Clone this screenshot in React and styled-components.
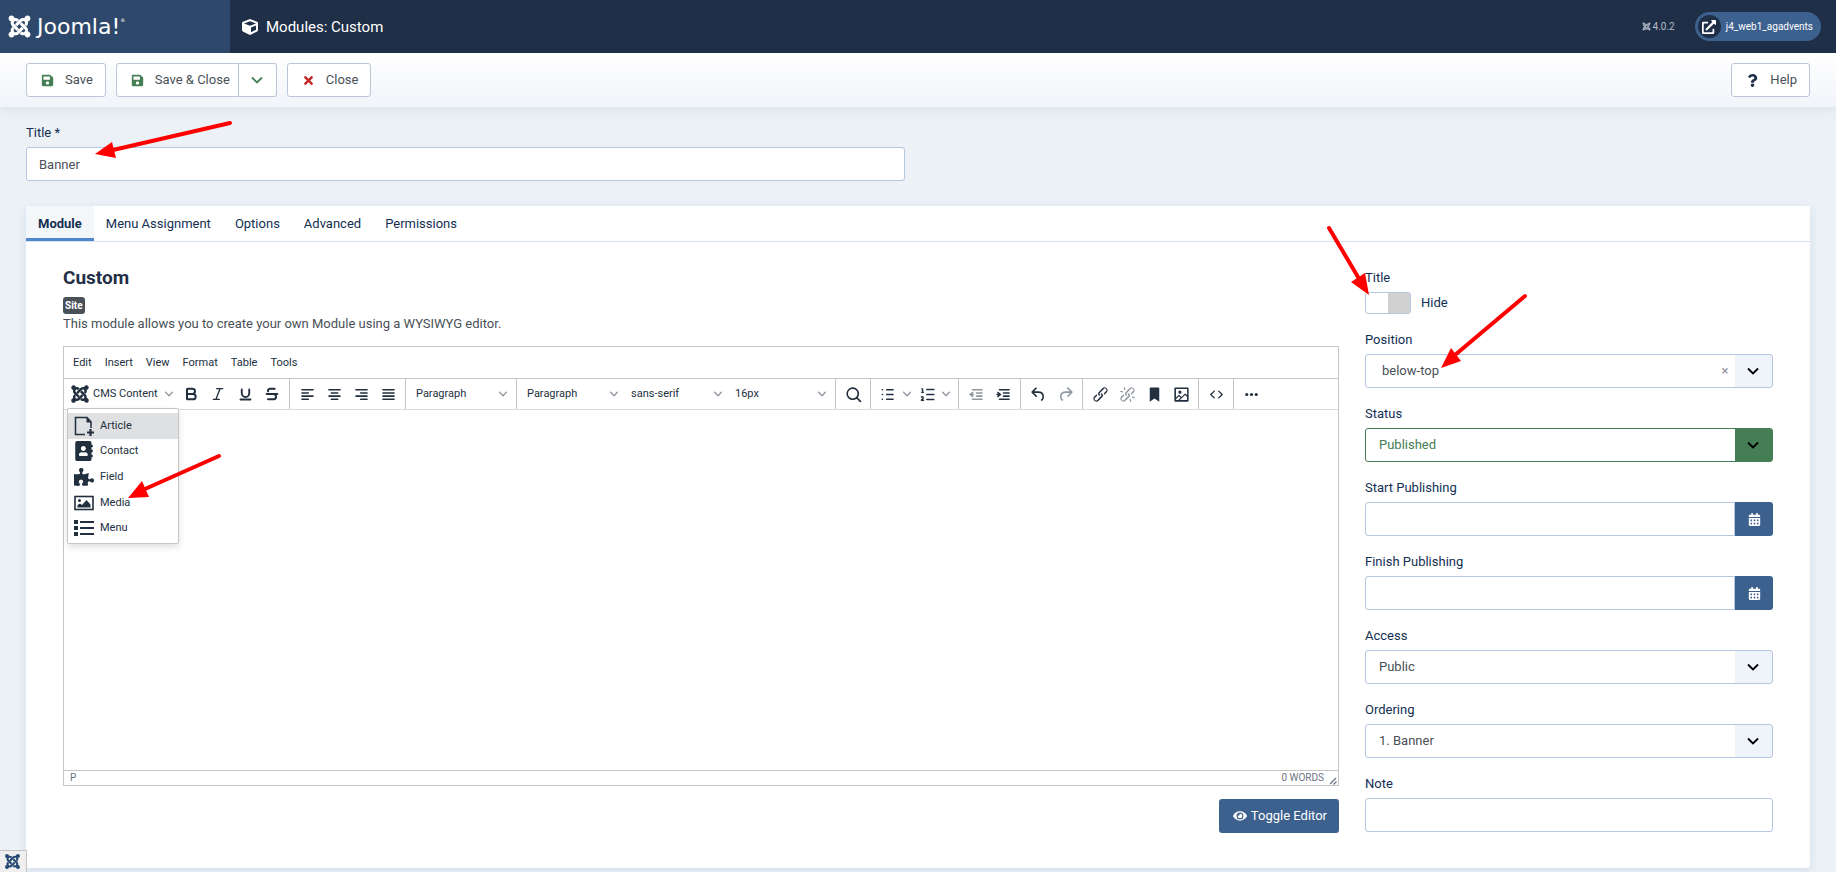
import React from "react";
import styled, { createGlobalStyle } from "styled-components";
import {
  FaJoomla,
  FaCube,
  FaSave,
  FaTimes,
  FaQuestion,
  FaExternalLinkAlt,
  FaEye,
  FaCalendarAlt,
  FaAddressBook,
  FaPuzzlePiece,
} from "react-icons/fa";
import { Bold, Italic, Underline, Strikethrough, ListOrdered } from "lucide-react";

const GlobalStyle = createGlobalStyle`
  :root {
    --color-header: #1f2f47;
    --color-logo: #2e486b;
    --color-page: #ebf1f5;
    --color-primary: #3d618f;
    --color-label: #132f53;
    --color-text: #495057;
    --color-editor: #222f3e;
    --color-line: #c5c5c5;
    --color-input-line: #b4c6e0;
    --color-success: #457d54;
    --font-size-small: 10px;
    --font-size-editor: 11px;
    --font-size-normal: 13px;
  }
  * {
    box-sizing: border-box;
  }
  body {
    margin: 0;
    background-color: var(--color-page);
    color: var(--color-text);
    font-family: Roboto, "Liberation Sans", sans-serif;
    font-size: var(--font-size-normal);
    line-height: 20px;
  }
  button, input, select {
    font: inherit;
    color: inherit;
    margin: 0;
  }
  button {
    padding: 0;
    border: 0;
    background: none;
    cursor: pointer;
  }
  svg {
    display: block;
    flex: none;
  }
`;

const Page = styled.div`
  position: relative;
`;

/* header */

const Header = styled.header`
  display: flex;
  height: 53px;
  background-color: var(--color-header);
  color: #fff;
`;

const Logo = styled.a`
  display: flex;
  align-items: center;
  gap: 5px;
  width: 230px;
  padding: 0 7px;
  background-color: var(--color-logo);
  color: #fff;
  text-decoration: none;
`;

const LogoText = styled.span`
  font-family: "DejaVu Sans", sans-serif;
  font-size: 22px;
  font-weight: 400;
  line-height: 24px;
`;

const LogoMark = styled.sup`
  font-size: 5px;
  line-height: 5px;
  vertical-align: 12px;
`;

const HeaderTitle = styled.h1`
  display: flex;
  align-items: center;
  gap: 8px;
  flex: 1;
  margin: 0;
  padding-left: 12px;
  font-size: 15px;
  font-weight: 400;
`;

const HeaderTools = styled.div`
  display: flex;
  align-items: center;
  gap: 20px;
  padding-right: 15px;
  font-size: var(--font-size-small);
`;

const Version = styled.span`
  display: flex;
  align-items: center;
  gap: 2px;
  color: #b5bdc8;
`;

const SiteLink = styled.a`
  display: flex;
  align-items: center;
  gap: 5px;
  height: 29px;
  padding: 0 8px 0 3px;
  border-radius: 15px;
  background-color: var(--color-primary);
  color: #fff;
  text-decoration: none;
`;

const SiteIcon = styled.span`
  display: flex;
  align-items: center;
  justify-content: center;
  width: 23px;
  height: 23px;
  border-radius: 50%;
  background-color: var(--color-header);
`;

/* toolbar */

const Toolbar = styled.div`
  display: flex;
  gap: 10px;
  padding: 10px 26px;
  background-image: linear-gradient(#fff, #f1f4f9);
  box-shadow: 0 3px 10px rgba(30, 60, 120, 0.08);
`;

const ToolbarButton = styled.button`
  display: flex;
  align-items: center;
  gap: 11px;
  height: 34px;
  padding: 0 12px 0 14px;
  border: 1px solid #bcc6d9;
  border-radius: ${(props) => props.$radius || "3px"};
  background-color: #fff;
  margin-left: ${(props) => (props.$end ? "auto" : "0")};

  svg {
    color: ${(props) => props.$iconColor || "var(--color-header)"};
  }
`;

const SplitGroup = styled.div`
  display: flex;
`;

const SplitMain = styled(ToolbarButton)`
  padding: 0 8px 0 14px;
`;

const SplitToggle = styled(ToolbarButton)`
  justify-content: center;
  width: 38px;
  padding: 0;
  border-left: 0;
`;

/* form */

const Main = styled.main`
  padding: 16px 26px 4px;
`;

const HalfField = styled.div`
  display: grid;
  gap: 4px;
  width: calc(50% - 13px);
  margin-bottom: 25px;
`;

const Field = styled.div`
  display: grid;
  gap: 4px;
`;

const Label = styled.label`
  color: var(--color-label);
`;

const TextInput = styled.input`
  width: 100%;
  min-width: 0;
  height: 34px;
  padding: 0 12px;
  border: 1px solid var(--color-input-line);
  border-radius: ${(props) => (props.$joined ? "3px 0 0 3px" : "3px")};
  background-color: #fff;
  outline: 0;
`;

const InputGroup = styled.div`
  display: flex;
`;

const DateButton = styled.button`
  display: flex;
  align-items: center;
  justify-content: center;
  flex: none;
  width: 38px;
  height: 34px;
  border-radius: 0 3px 3px 0;
  background-color: var(--color-primary);
  color: #fff;
`;

const SelectBox = styled.div`
  display: flex;
  align-items: center;
  position: relative;
  height: 34px;
  border: 1px solid ${(props) => props.$line || "var(--color-input-line)"};
  border-radius: 3px;
  overflow: hidden;
  background-image: linear-gradient(
    ${(props) => props.$fill || "#eff4fb"},
    ${(props) => props.$fill || "#eff4fb"}
  );
  background-position: right;
  background-size: 37px 100%;
  background-repeat: no-repeat;
  color: ${(props) => props.$color || "inherit"};

  > svg {
    position: absolute;
    right: 13px;
    color: #000;
    pointer-events: none;
  }
`;

const Select = styled.select`
  width: 100%;
  height: 100%;
  padding: 0 ${(props) => (props.$wide ? "16px" : "13px")};
  border: 0;
  background: none;
  appearance: none;
  outline: 0;
`;

const ClearButton = styled.button`
  position: absolute;
  right: 42px;
  width: 10px;
  color: #8c9197;
  font-size: var(--font-size-normal);
`;

const SwitchRow = styled.div`
  display: flex;
  align-items: center;
  gap: 10px;
  height: 22px;
  color: var(--color-label);
`;

const Switch = styled.input`
  appearance: none;
  width: 46px;
  height: 22px;
  border: 1px solid var(--color-input-line);
  border-radius: 3px;
  background-image: linear-gradient(90deg, #fff 50%, #d1d1d1 50%);
`;

/* card */

const Card = styled.section`
  border-radius: 0 0 3px 3px;
  background-color: #fff;
  box-shadow: 0 3px 10px rgba(40, 90, 170, 0.12);
`;

const Tabs = styled.div`
  display: flex;
  height: 36px;
  border-bottom: 1px solid #d6e0ec;
`;

const Tab = styled.button`
  padding: 0 12px;
  color: var(--color-label);
  font-weight: ${(props) => (props.$active ? 700 : 400)};
  background-color: ${(props) => (props.$active ? "#f3f7fa" : "transparent")};
  box-shadow: ${(props) => (props.$active ? "inset 0 -3px #4f86cc" : "none")};
`;

const CardBody = styled.div`
  display: grid;
  grid-template-columns: repeat(12, minmax(0, 1fr));
  column-gap: 26px;
  padding: 25px 37px 35px;
`;

const Content = styled.div`
  grid-column: span 9;
`;

const Sidebar = styled.div`
  display: flex;
  flex-direction: column;
  gap: 16px;
  grid-column: span 3;
  padding-top: 1px;
`;

const ContentTitle = styled.h2`
  margin: 0 0 8px;
  color: var(--color-header);
  font-size: 19px;
  line-height: 22px;
`;

const Badge = styled.span`
  display: block;
  width: fit-content;
  padding: 0 2px;
  border-radius: 3px;
  background-color: var(--color-text);
  color: #fff;
  font-size: var(--font-size-small);
  font-weight: 700;
  line-height: 17px;
`;

const Description = styled.p`
  margin: 0 0 12px;
`;

/* editor */

const Editor = styled.div`
  display: flex;
  flex-direction: column;
  height: 440px;
  border: 1px solid var(--color-line);
  color: var(--color-editor);
  font-size: var(--font-size-editor);
`;

const MenuBar = styled.div`
  display: flex;
  gap: 1px;
  height: 32px;
  padding: 1px 3px 0;
  border-bottom: 1px solid var(--color-line);
`;

const MenuBarButton = styled.button`
  padding: 0 6px;
`;

const EditorToolbar = styled.div`
  display: flex;
  height: 31px;
  border-bottom: 1px solid #d9d9d9;
`;

const ToolGroup = styled.div`
  display: flex;
  align-items: center;
  position: relative;
  gap: ${(props) => props.$gap || "1px"};
  padding: 0 4px;
  border-right: ${(props) => (props.$last ? "0" : "1px solid var(--color-line)")};
`;

const ToolButton = styled.button`
  display: flex;
  align-items: center;
  justify-content: center;
  gap: 6px;
  width: 26px;
  height: 26px;
  color: ${(props) => (props.disabled ? "#90979f" : "inherit")};

  .chevron {
    color: #8f969e;
  }
`;

const SplitTool = styled(ToolButton)`
  width: 39px;
`;

const MenuTool = styled(ToolButton)`
  justify-content: flex-start;
  gap: 3px;
  width: ${(props) => props.$width || "102px"};
  padding: ${(props) => props.$padding || "0 5px 0 6px"};

  .chevron {
    margin-left: auto;
  }
`;

const DropMenu = styled.div`
  display: grid;
  grid-template-rows: repeat(5, 1fr);
  position: absolute;
  top: 29px;
  left: 3px;
  width: 112px;
  height: 136px;
  padding: 4px 0 2px;
  border: 1px solid var(--color-line);
  border-radius: 2px;
  background-color: #fff;
  box-shadow: 0 3px 6px rgba(34, 47, 62, 0.15);
  z-index: 1;
`;

const DropItem = styled.button`
  display: flex;
  align-items: center;
  gap: 6px;
  padding: 0 6px;
  background-color: ${(props) => (props.$active ? "#dee0e2" : "transparent")};
`;

const EditArea = styled.div`
  flex: 1;
`;

const StatusBar = styled.div`
  display: flex;
  align-items: center;
  justify-content: space-between;
  height: 15px;
  padding: 0 1px 0 6px;
  border-top: 1px solid var(--color-line);
  color: #6b7480;
  font-size: var(--font-size-small);
  line-height: 14px;
`;

const WordCount = styled.span`
  display: flex;
  align-items: flex-end;
  gap: 5px;
`;

const ToggleEditor = styled.button`
  display: flex;
  align-items: center;
  gap: 4px;
  height: 34px;
  margin: 13px 0 0 auto;
  padding: 0 12px 0 14px;
  border-radius: 3px;
  background-color: var(--color-primary);
  color: #fff;
`;

/* overlays */

const DebugTab = styled.button`
  display: flex;
  align-items: center;
  position: fixed;
  left: 0;
  bottom: 0;
  width: 27px;
  height: 22px;
  padding-left: 4px;
  border: 1px solid #c4c4c4;
  border-width: 1px 1px 0 0;
  background-color: #efefef;
  color: #274a74;
`;

const Arrows = styled.svg`
  position: absolute;
  top: 0;
  left: 0;
  pointer-events: none;
  z-index: 2;
`;

/* every icon below is drawn on a 24 x 24 grid */

const paths = {
  search:
    "M16 17.3a8 8 0 1 1 1.4-1.4l4.3 4.4a1 1 0 0 1-1.4 1.4l-4.4-4.3zm-5-.3a6 6 0 1 0 0-12 6 6 0 0 0 0 12z",
  undo: "M6.4 8H12c3.7 0 6.2 2 6.8 5.1.6 2.7-.4 5.6-2.3 6.8a1 1 0 0 1-1-1.8c1.1-.6 1.8-2.7 1.4-4.6-.5-2.1-2.1-3.5-4.9-3.5H6.4l3.3 3.3a1 1 0 1 1-1.4 1.4l-5-5a1 1 0 0 1 0-1.4l5-5a1 1 0 0 1 1.4 1.4L6.4 8z",
  redo: "M17.6 10H12c-2.8 0-4.4 1.4-4.9 3.5-.4 2 .3 4 1.4 4.6a1 1 0 1 1-1 1.8c-2-1.2-2.9-4.1-2.3-6.8.6-3 3-5.1 6.8-5.1h5.6l-3.3-3.3a1 1 0 1 1 1.4-1.4l5 5a1 1 0 0 1 0 1.4l-5 5a1 1 0 0 1-1.4-1.4l3.3-3.3z",
  link: "M6.2 12.3a1 1 0 0 1 1.4 1.4l-2.1 2a2 2 0 1 0 2.7 2.8l4.8-4.8a1 1 0 0 0 0-1.4 1 1 0 1 1 1.4-1.3 2.9 2.9 0 0 1 0 4L9.6 20a3.9 3.9 0 0 1-5.5-5.5l2-2zm11.6-.6a1 1 0 0 1-1.4-1.4l2-2a2 2 0 1 0-2.6-2.8L11 10.3a1 1 0 0 0 0 1.4A1 1 0 1 1 9.6 13a2.9 2.9 0 0 1 0-4L14.4 4a3.9 3.9 0 0 1 5.5 5.5l-2 2z",
  bookmark: "M6 4v17l6-4 6 4V4c0-.6-.4-1-1-1H7a1 1 0 0 0-1 1z",
  image:
    "M5 15.7l3.3-3.2c.3-.3.7-.3 1 0L12 15l4.1-4c.3-.4.8-.4 1 0l2 1.9V5H5v10.7zM5 18V19h3l2.8-2.9-2-2L5 17.9zm14-3l-2.5-2.4-6.4 6.5H19v-4zM4 3h16c.6 0 1 .4 1 1v16c0 .6-.4 1-1 1H4a1 1 0 0 1-1-1V4c0-.6.4-1 1-1zm6 8a2 2 0 1 0 0-4 2 2 0 0 0 0 4z",
  code: "M9.8 15.7c.3.3.3.8 0 1-.3.4-.9.4-1.2 0l-4.4-4.1a.8.8 0 0 1 0-1.2l4.4-4.2c.3-.3.9-.3 1.2 0 .3.3.3.8 0 1.1L6 12l3.8 3.7zM14.2 15.7c-.3.3-.3.8 0 1 .4.4.9.4 1.2 0l4.4-4.1c.3-.3.3-.8 0-1.2l-4.4-4.2a.8.8 0 0 0-1.2 0c-.3.3-.3.8 0 1.1L18 12l-3.8 3.7z",
};

const lines = {
  left: "M5 6h14M5 10h8M5 14h14M5 18h8",
  center: "M5 6h14M8 10h8M5 14h14M8 18h8",
  right: "M5 6h14M11 10h8M5 14h14M11 18h8",
  justify: "M5 6h14M5 10h14M5 14h14M5 18h14",
  bullets: "M11 6h8M11 12h8M11 18h8M5.5 6h.1M5.5 12h.1M5.5 18h.1",
  outdent: "M7 6h12M12 10h7M12 14h7M7 18h12M7 9.500L4 12l3 2.500M5 12h3",
  indent: "M7 6h12M12 10h7M12 14h7M7 18h12M5 9.500L8 12l-3 2.500M4 12h3",
  rays: "M8 3.500l.6 2.200M3.500 8l2.200.6M16 20.500l-.6-2.200M20.500 16l-2.200-.6",
};

const Glyph = ({ name, size = 19 }) => (
  <svg width={size} height={size} viewBox="0 0 24 24" aria-hidden="true">
    {paths[name] ? (
      <path d={paths[name]} fill="currentColor" fillRule="evenodd" />
    ) : (
      <path
        d={lines[name]}
        fill="none"
        stroke="currentColor"
        strokeWidth="2"
        strokeLinecap="round"
      />
    )}
  </svg>
);

const UnlinkIcon = () => (
  <svg width="19" height="19" viewBox="0 0 24 24" aria-hidden="true">
    <path d={paths.link} fill="currentColor" />
    <path d={lines.rays} stroke="currentColor" strokeWidth="1.5" strokeLinecap="round" />
  </svg>
);

const DotsIcon = () => (
  <svg width="19" height="19" viewBox="0 0 24 24" fill="currentColor" aria-hidden="true">
    <circle cx="6" cy="12" r="2" />
    <circle cx="12" cy="12" r="2" />
    <circle cx="18" cy="12" r="2" />
  </svg>
);

const Chevron = () => (
  <svg className="chevron" width="8" height="8" viewBox="0 0 10 10" aria-hidden="true">
    <path
      d="M8.7 2.2c.3-.3.8-.3 1 0 .4.4.4.9 0 1.2L5.7 7.8c-.3.3-.9.3-1.2 0L.2 3.4a.8.8 0 0 1 0-1.2c.3-.3.8-.3 1.1 0L5 6l3.7-3.8z"
      fill="currentColor"
    />
  </svg>
);

const BigChevron = () => (
  <svg width="12" height="8" viewBox="0 0 12 8" aria-hidden="true">
    <path d="M1 1.5l5 5 5-5" fill="none" stroke="currentColor" strokeWidth="1.8" />
  </svg>
);

const ArticleIcon = () => (
  <svg width="20" height="20" viewBox="0 0 20 20" fill="none" aria-hidden="true">
    <path d="M11 18.5H1.500V1.500h11.500l4 4.500v6" stroke="currentColor" strokeWidth="1.5" />
    <path d="M12.5 1v5.500H18z" fill="currentColor" />
    <path d="M16.5 13v7M13 16.500h7" stroke="currentColor" strokeWidth="2.2" />
  </svg>
);

const MediaIcon = () => (
  <svg width="20" height="20" viewBox="0 0 20 20" fill="none" aria-hidden="true">
    <rect x="1" y="3.5" width="18" height="13" stroke="currentColor" strokeWidth="1.6" />
    <circle cx="5.5" cy="7.5" r="1.5" fill="currentColor" />
    <path d="M3.5 14.500v-2.500l2.500-1.500 2 1.500 4.500-5 4 4.500v3z" fill="currentColor" />
  </svg>
);

const MenuIcon = () => (
  <svg width="20" height="20" viewBox="0 0 20 20" fill="currentColor" aria-hidden="true">
    <path d="M0 2h4v4H0zM0 8h4v4H0zM0 14h4v4H0zM6 3h14v2H6zM6 9h14v2H6zM6 15h14v2H6z" />
  </svg>
);

const GripIcon = () => (
  <svg width="8" height="8" viewBox="0 0 8 8" aria-hidden="true">
    <path d="M1 7l6-6M4.5 7.500l3-3" stroke="currentColor" strokeWidth="1.3" />
  </svg>
);

const tabs = ["Module", "Menu Assignment", "Options", "Advanced", "Permissions"];
const menus = ["Edit", "Insert", "View", "Format", "Table", "Tools"];
const cmsItems = [
  { text: "Article", icon: <ArticleIcon /> },
  { text: "Contact", icon: <FaAddressBook size={20} /> },
  { text: "Field", icon: <FaPuzzlePiece size={20} /> },
  { text: "Media", icon: <MediaIcon /> },
  { text: "Menu", icon: <MenuIcon /> },
];
const arrows = [
  { line: "M230 123L113 150", head: "95,154 112,142 116,158" },
  { line: "M219 456L145 489", head: "128,498 142,481 149,497" },
  { line: "M1329 228L1358 277", head: "1369,295 1351,282 1365,273" },
  { line: "M1525 296L1455 355", head: "1441,368 1451,348 1461,361" },
];

const Tool = ({ label, children, ...rest }) => (
  <ToolButton type="button" aria-label={label} {...rest}>
    {children}
  </ToolButton>
);

const FormatPicker = ({ text }) => (
  <MenuTool type="button">
    {text}
    <Chevron />
  </MenuTool>
);

const DateField = ({ id, label }) => (
  <Field>
    <Label htmlFor={id}>{label}</Label>
    <InputGroup>
      <TextInput id={id} type="text" $joined />
      <DateButton type="button" aria-label={`Open calendar: ${label}`}>
        <FaCalendarAlt size={13} />
      </DateButton>
    </InputGroup>
  </Field>
);

const SelectField = ({ id, label, value, clearable, ...box }) => (
  <Field>
    <Label htmlFor={id}>{label}</Label>
    <SelectBox {...box}>
      <Select id={id} defaultValue={value} $wide={clearable}>
        <option>{value}</option>
      </Select>
      {clearable ? (
        <ClearButton type="button" aria-label="Clear">
          ×
        </ClearButton>
      ) : null}
      <BigChevron />
    </SelectBox>
  </Field>
);

const EditorPanel = () => (
  <Editor>
    <MenuBar>
      {menus.map((menu) => (
        <MenuBarButton type="button" key={menu}>
          {menu}
        </MenuBarButton>
      ))}
    </MenuBar>
    <EditorToolbar>
      <ToolGroup>
        <MenuTool type="button" $width="109px" $padding="0 4px 0 2px">
          <FaJoomla size={20} />
          CMS Content
          <Chevron />
        </MenuTool>
        <Tool label="Bold">
          <Bold size={16} strokeWidth={3} />
        </Tool>
        <Tool label="Italic">
          <Italic size={16} strokeWidth={2} />
        </Tool>
        <Tool label="Underline">
          <Underline size={15} strokeWidth={3} />
        </Tool>
        <Tool label="Strikethrough">
          <Strikethrough size={16} strokeWidth={3} />
        </Tool>
        <DropMenu>
          {cmsItems.map((item, index) => (
            <DropItem type="button" key={item.text} $active={index === 0}>
              {item.icon}
              {item.text}
            </DropItem>
          ))}
        </DropMenu>
      </ToolGroup>
      <ToolGroup>
        {["left", "center", "right", "justify"].map((name) => (
          <Tool label={`Align ${name}`} key={name}>
            <Glyph name={name} />
          </Tool>
        ))}
      </ToolGroup>
      <ToolGroup>
        <FormatPicker text="Paragraph" />
      </ToolGroup>
      <ToolGroup $gap="2px">
        <FormatPicker text="Paragraph" />
        <FormatPicker text="sans-serif" />
        <FormatPicker text="16px" />
      </ToolGroup>
      <ToolGroup>
        <Tool label="Find and replace">
          <Glyph name="search" />
        </Tool>
      </ToolGroup>
      <ToolGroup>
        <SplitTool type="button" aria-label="Bullet list">
          <Glyph name="bullets" />
          <Chevron />
        </SplitTool>
        <SplitTool type="button" aria-label="Numbered list">
          <ListOrdered size={17} strokeWidth={2} />
          <Chevron />
        </SplitTool>
      </ToolGroup>
      <ToolGroup>
        <Tool label="Decrease indent" disabled>
          <Glyph name="outdent" />
        </Tool>
        <Tool label="Increase indent">
          <Glyph name="indent" />
        </Tool>
      </ToolGroup>
      <ToolGroup>
        <Tool label="Undo">
          <Glyph name="undo" />
        </Tool>
        <Tool label="Redo" disabled>
          <Glyph name="redo" />
        </Tool>
      </ToolGroup>
      <ToolGroup>
        <Tool label="Link">
          <Glyph name="link" />
        </Tool>
        <Tool label="Remove link" disabled>
          <UnlinkIcon />
        </Tool>
        <Tool label="Anchor">
          <Glyph name="bookmark" />
        </Tool>
        <Tool label="Image">
          <Glyph name="image" />
        </Tool>
      </ToolGroup>
      <ToolGroup>
        <Tool label="Source code">
          <Glyph name="code" />
        </Tool>
      </ToolGroup>
      <ToolGroup $last>
        <Tool label="More">
          <DotsIcon />
        </Tool>
      </ToolGroup>
    </EditorToolbar>
    <EditArea contentEditable suppressContentEditableWarning aria-label="Content" />
    <StatusBar>
      <span>P</span>
      <WordCount>
        0 WORDS
        <GripIcon />
      </WordCount>
    </StatusBar>
  </Editor>
);

const App = () => (
  <Page>
    <GlobalStyle />
    <Header>
      <Logo href="#">
        <FaJoomla size={25} />
        <LogoText>
          Joomla!<LogoMark>®</LogoMark>
        </LogoText>
      </Logo>
      <HeaderTitle>
        <FaCube size={16} />
        Modules: Custom
      </HeaderTitle>
      <HeaderTools>
        <Version>
          <FaJoomla size={9} />
          4.0.2
        </Version>
        <SiteLink href="#">
          <SiteIcon>
            <FaExternalLinkAlt size={14} />
          </SiteIcon>
          j4_web1_agadvents
        </SiteLink>
      </HeaderTools>
    </Header>

    <Toolbar>
      <ToolbarButton type="button" $iconColor="var(--color-success)">
        <FaSave size={13} />
        Save
      </ToolbarButton>
      <SplitGroup>
        <SplitMain type="button" $iconColor="var(--color-success)" $radius="3px 0 0 3px">
          <FaSave size={13} />
          Save &amp; Close
        </SplitMain>
        <SplitToggle
          type="button"
          aria-label="More save options"
          $iconColor="var(--color-success)"
          $radius="0 3px 3px 0"
        >
          <BigChevron />
        </SplitToggle>
      </SplitGroup>
      <ToolbarButton type="button" $iconColor="#c52827">
        <FaTimes size={13} />
        Close
      </ToolbarButton>
      <ToolbarButton type="button" $end>
        <FaQuestion size={13} />
        Help
      </ToolbarButton>
    </Toolbar>

    <Main>
      <HalfField>
        <Label htmlFor="title">Title *</Label>
        <TextInput id="title" type="text" defaultValue="Banner" />
      </HalfField>

      <Card>
        <Tabs role="tablist">
          {tabs.map((tab, index) => (
            <Tab
              type="button"
              role="tab"
              key={tab}
              aria-selected={index === 0}
              $active={index === 0}
            >
              {tab}
            </Tab>
          ))}
        </Tabs>
        <CardBody>
          <Content>
            <ContentTitle>Custom</ContentTitle>
            <Badge>Site</Badge>
            <Description>
              This module allows you to create your own Module using a WYSIWYG editor.
            </Description>
            <EditorPanel />
            <ToggleEditor type="button">
              <FaEye size={14} />
              Toggle Editor
            </ToggleEditor>
          </Content>
          <Sidebar>
            <Field>
              <Label htmlFor="showtitle">Title</Label>
              <SwitchRow>
                <Switch id="showtitle" type="checkbox" />
                Hide
              </SwitchRow>
            </Field>
            <SelectField id="position" label="Position" value="below-top" clearable />
            <SelectField
              id="status"
              label="Status"
              value="Published"
              $line="var(--color-success)"
              $fill="var(--color-success)"
              $color="var(--color-success)"
            />
            <DateField id="start" label="Start Publishing" />
            <DateField id="finish" label="Finish Publishing" />
            <SelectField id="access" label="Access" value="Public" />
            <SelectField id="ordering" label="Ordering" value="1. Banner" />
            <Field>
              <Label htmlFor="note">Note</Label>
              <TextInput id="note" type="text" />
            </Field>
          </Sidebar>
        </CardBody>
      </Card>
    </Main>

    <DebugTab type="button" aria-label="Debug console">
      <FaJoomla size={17} />
    </DebugTab>

    <Arrows width="1600" height="520" aria-hidden="true">
      {arrows.map((arrow) => (
        <g key={arrow.line}>
          <path d={arrow.line} stroke="#f00" strokeWidth="4" strokeLinecap="round" />
          <polygon points={arrow.head} fill="#f00" />
        </g>
      ))}
    </Arrows>
  </Page>
);

export default App;
